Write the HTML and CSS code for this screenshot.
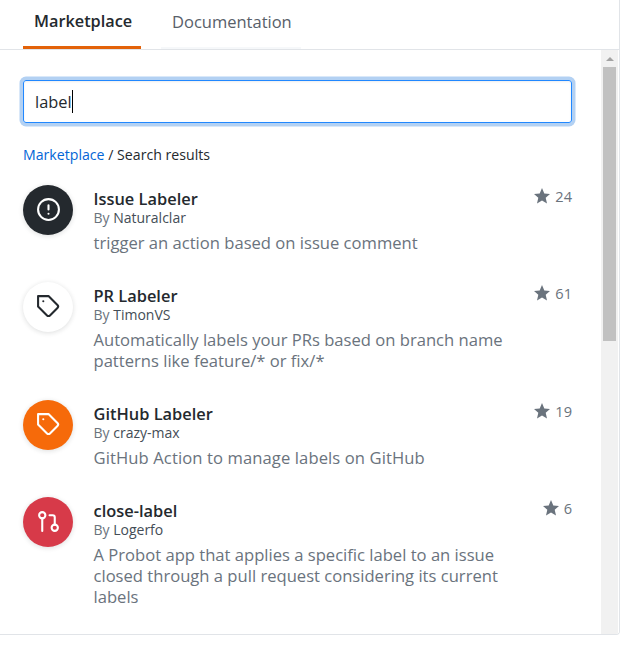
FILE: index.html
```html
<!DOCTYPE html>
<html lang="en">
<head>
<meta charset="utf-8">
<title>Marketplace</title>
<link rel="stylesheet" href="styles.css">
</head>
<body>
<svg class="defs" width="0" height="0">
  <symbol id="star" viewBox="0 0 16 16"><path d="M8 0l2.3 5.4 5.7.5-4.3 3.8 1.3 5.9-5-3.1-5 3.1 1.3-5.9L0 5.900l5.700-.5z"/></symbol>
  <symbol id="tag" viewBox="0 0 24 24"><path d="M20.590 13.410l-7.170 7.170a2 2 0 0 1-2.830 0L2 12V2h10l8.590 8.590a2 2 0 0 1 0 2.820z"/><path d="M7 7h.01"/></symbol>
</svg>
<div class="panel">
  <nav class="tabs">
    <a class="tab active">Marketplace</a>
    <a class="tab">Documentation</a>
  </nav>
  <div class="body">
    <main class="content">
      <div class="search"><span>label</span><i class="caret"></i></div>
      <p class="crumbs"><a>Marketplace</a> / Search results</p>
      <article class="item">
        <div class="badge dark"><svg viewBox="0 0 24 24"><circle cx="12" cy="12" r="10"/><path d="M12 8v4M12 16h.01"/></svg></div>
        <div class="info">
          <h3>Issue Labeler</h3>
          <p class="by">By <b>Naturalclar</b></p>
          <p class="desc">trigger an action based on issue comment</p>
        </div>
        <div class="stars"><svg><use href="#star"/></svg><span>24</span></div>
      </article>
      <article class="item">
        <div class="badge white"><svg><use href="#tag"/></svg></div>
        <div class="info">
          <h3>PR Labeler</h3>
          <p class="by">By <b>TimonVS</b></p>
          <p class="desc">Automatically labels your PRs based on branch name<br>patterns like feature/* or fix/*</p>
        </div>
        <div class="stars"><svg><use href="#star"/></svg><span>61</span></div>
      </article>
      <article class="item">
        <div class="badge orange"><svg><use href="#tag"/></svg></div>
        <div class="info">
          <h3>GitHub Labeler</h3>
          <p class="by">By <b>crazy-max</b></p>
          <p class="desc wide">GitHub Action to manage labels on GitHub</p>
        </div>
        <div class="stars"><svg><use href="#star"/></svg><span>19</span></div>
      </article>
      <article class="item">
        <div class="badge red"><svg viewBox="0 0 24 24"><circle cx="18" cy="18" r="3"/><circle cx="6" cy="6" r="3"/><path d="M13 6h3a2 2 0 0 1 2 2v7M6 9v12"/></svg></div>
        <div class="info">
          <h3>close-label</h3>
          <p class="by">By <b>Logerfo</b></p>
          <p class="desc">A Probot app that applies a specific label to an issue<br>closed through a pull request considering its current<br>labels</p>
        </div>
        <div class="stars"><svg><use href="#star"/></svg><span>6</span></div>
      </article>
    </main>
    <div class="scrollbar"><i class="arrow"></i><i class="thumb"></i></div>
  </div>
</div>
</body>
</html>
```
FILE: styles.css
```css
* { box-sizing: border-box; margin: 0; padding: 0; }
body { background: #fff; color: #24292e; font-family: "Open Sans", "Noto Sans", sans-serif; }
.defs { display: block; }
.panel {
  width: 620px; height: 635px;
  border: solid #e1e4e8; border-width: 0 1px 1px 0;
  border-bottom-right-radius: 4px;
  overflow: hidden;
}
.tabs {
  display: flex; gap: 20px;
  height: 50px; padding-left: 23px;
  border-bottom: 1px solid #e1e4e8;
}
.tab {
  height: 49px; width: 140px; padding: 0 11px;
  border-bottom: 2px solid #f6f8fa;
  font-size: 16.5px; line-height: 43px; color: #586069; white-space: nowrap;
}
.tab.active { width: 118px; border-bottom: 3px solid #e36209; color: #24292e; font-size: 16.3px; font-weight: 600; }
.body { display: flex; height: 584px; }
.content { flex: 1; padding: 30px 29px 0 23px; }
.search {
  display: flex; align-items: center;
  height: 43px; padding-left: 11px;
  border: 1px solid #2188ff; border-radius: 3px;
  box-shadow: inset 0 1px 2px rgba(27,31,35,.075), 0 0 0 3.5px #b3d1f3;
  font-size: 16.4px;
}
.caret { width: 1px; height: 23px; background: #000; }
.crumbs { margin-top: 21px; height: 21px; line-height: 21px; font-size: 14.150px; white-space: nowrap; }
.crumbs a { color: #0366d6; }
.item { display: flex; margin-bottom: 29px; }
.crumbs + .item { margin-top: 20px; }
.badge {
  width: 50px; height: 50px; padding-bottom: 2px; border-radius: 50%;
  display: flex; align-items: center; justify-content: center;
  box-shadow: 0 1px 5px rgba(27,31,35,.15);
}
.badge svg {
  width: 25px; height: 25px; fill: none; stroke: #fff;
  stroke-width: 2; stroke-linecap: round; stroke-linejoin: round;
}
.dark { background: #24292e; }
.white { background: #fff; }
.white svg { stroke: #24292e; }
.orange { background: #f66a0a; }
.red { background: #d73a49; }
.info { flex: 1; padding: 3px 0 0 20.5px; white-space: nowrap; }
h3 { font-size: 16.4px; line-height: 21px; font-weight: 600; }
.by { font-size: 14px; line-height: 18px; color: #6a737d; }
.by b { font-weight: 400; color: #444d56; }
.desc { margin-top: 5px; font-size: 16.6px; line-height: 21px; color: #6a737d; }
.desc.wide { letter-spacing: .1px; }
.stars { display: flex; gap: 5px; height: 22px; align-items: center; color: #6a737d; font-size: 14.600px; }
.stars svg { width: 16px; height: 16px; fill: #6a737d; }
.scrollbar { width: 18px; padding: 7px 3px 0 2px; background: linear-gradient(90deg, #f1f1f1 17px, #fff 17px); display: flex; flex-direction: column; align-items: center; }
.arrow { border: solid transparent; border-width: 0 4px 4px; border-bottom-color: #a3a3a3; }
.thumb { width: 13px; height: 274px; margin-top: 6px; background: #c1c1c1; }
```
